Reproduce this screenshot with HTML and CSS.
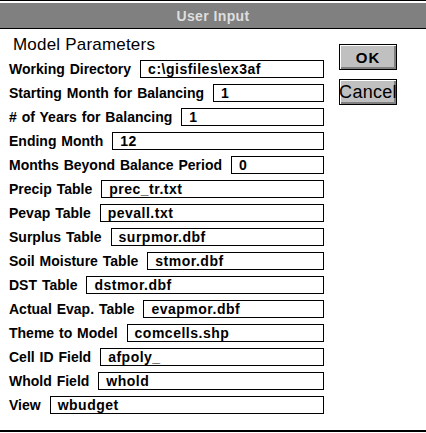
FILE: index.html
```html
<!DOCTYPE html>
<html>
<head>
<meta charset="utf-8">
<link rel="stylesheet" href="styles.css">
</head>
<body>
<div class="window">
  <div class="titlebar"><span class="title">User Input</span></div>
  <div class="content">
    <div class="form">
      <div class="heading">Model Parameters</div>
      <div class="rows">
        <div class="row"><span class="label">Working Directory</span><div class="field">c:\gisfiles\ex3af</div></div>
        <div class="row"><span class="label">Starting Month for Balancing</span><div class="field">1</div></div>
        <div class="row"><span class="label"># of Years for Balancing</span><div class="field">1</div></div>
        <div class="row"><span class="label">Ending Month</span><div class="field">12</div></div>
        <div class="row"><span class="label">Months Beyond Balance Period</span><div class="field">0</div></div>
        <div class="row"><span class="label">Precip Table</span><div class="field">prec_tr.txt</div></div>
        <div class="row"><span class="label">Pevap Table</span><div class="field">pevall.txt</div></div>
        <div class="row"><span class="label">Surplus Table</span><div class="field">surpmor.dbf</div></div>
        <div class="row"><span class="label">Soil Moisture Table</span><div class="field">stmor.dbf</div></div>
        <div class="row"><span class="label">DST Table</span><div class="field">dstmor.dbf</div></div>
        <div class="row"><span class="label">Actual Evap. Table</span><div class="field">evapmor.dbf</div></div>
        <div class="row"><span class="label">Theme to Model</span><div class="field">comcells.shp</div></div>
        <div class="row"><span class="label">Cell ID Field</span><div class="field">afpoly_</div></div>
        <div class="row"><span class="label">Whold Field</span><div class="field">whold</div></div>
        <div class="row"><span class="label">View</span><div class="field">wbudget</div></div>
      </div>
    </div>
    <div class="buttons">
      <div class="btn btn-ok">OK</div>
      <div class="btn btn-cancel">Cancel</div>
    </div>
  </div>
  <div class="bottomline"></div>
</div>
</body>
</html>
```

FILE: styles.css
```css
html, body {
  margin: 0;
  padding: 0;
  background: #ffffff;
}
body {
  font-family: "Liberation Sans", Arial, sans-serif;
  color: #000;
  width: 426px;
  height: 433px;
  overflow: hidden;
}
.window {
  display: flex;
  flex-direction: column;
}
.titlebar {
  border-top: 1px solid #000;
  padding-top: 2px;
  border-bottom: 1px solid #000;
}
.title {
  display: flex;
  justify-content: center;
  align-items: center;
  height: 25px;
  background: #808080;
  color: #dedede;
  font-weight: bold;
  font-size: 14px;
  letter-spacing: 0.4px;
}
.content {
  display: flex;
  align-items: flex-start;
  padding-left: 9px;
}
.form {
  width: 315px;
  display: flex;
  flex-direction: column;
}
.heading {
  font-size: 17px;
  line-height: 20px;
  margin-top: 6px;
  padding-left: 4px;
  margin-bottom: 5px;
  letter-spacing: 0.2px;
}
.rows {
  display: flex;
  flex-direction: column;
  gap: 6px;
}
.row {
  display: flex;
  align-items: center;
  height: 18px;
}
.label {
  font-weight: bold;
  font-size: 14px;
  word-spacing: 1px;
  white-space: nowrap;
  margin-right: 9px;
}
.field {
  flex: 1;
  height: 16px;
  border: 1px solid #000;
  font-weight: bold;
  font-size: 14px;
  letter-spacing: 0.5px;
  line-height: 16px;
  padding-left: 7px;
  white-space: nowrap;
  overflow: hidden;
}
.buttons {
  display: flex;
  flex-direction: column;
  gap: 9px;
  margin-left: 15px;
  margin-top: 15px;
}
.btn {
  width: 56px;
  height: 24px;
  border: 1px solid #000;
  background: #c0c0c0;
  box-shadow: inset 1px 1px 0 #ffffff, inset -2px -2px 0 #808080;
  display: flex;
  align-items: center;
  justify-content: center;
}
.btn-ok {
  font-size: 15px;
  font-weight: bold;
  letter-spacing: 1px;
}
.btn-cancel {
  font-size: 18px;
  letter-spacing: 0.3px;
}
.bottomline {
  margin-top: 16px;
  border-top: 2px solid #000;
}
```
